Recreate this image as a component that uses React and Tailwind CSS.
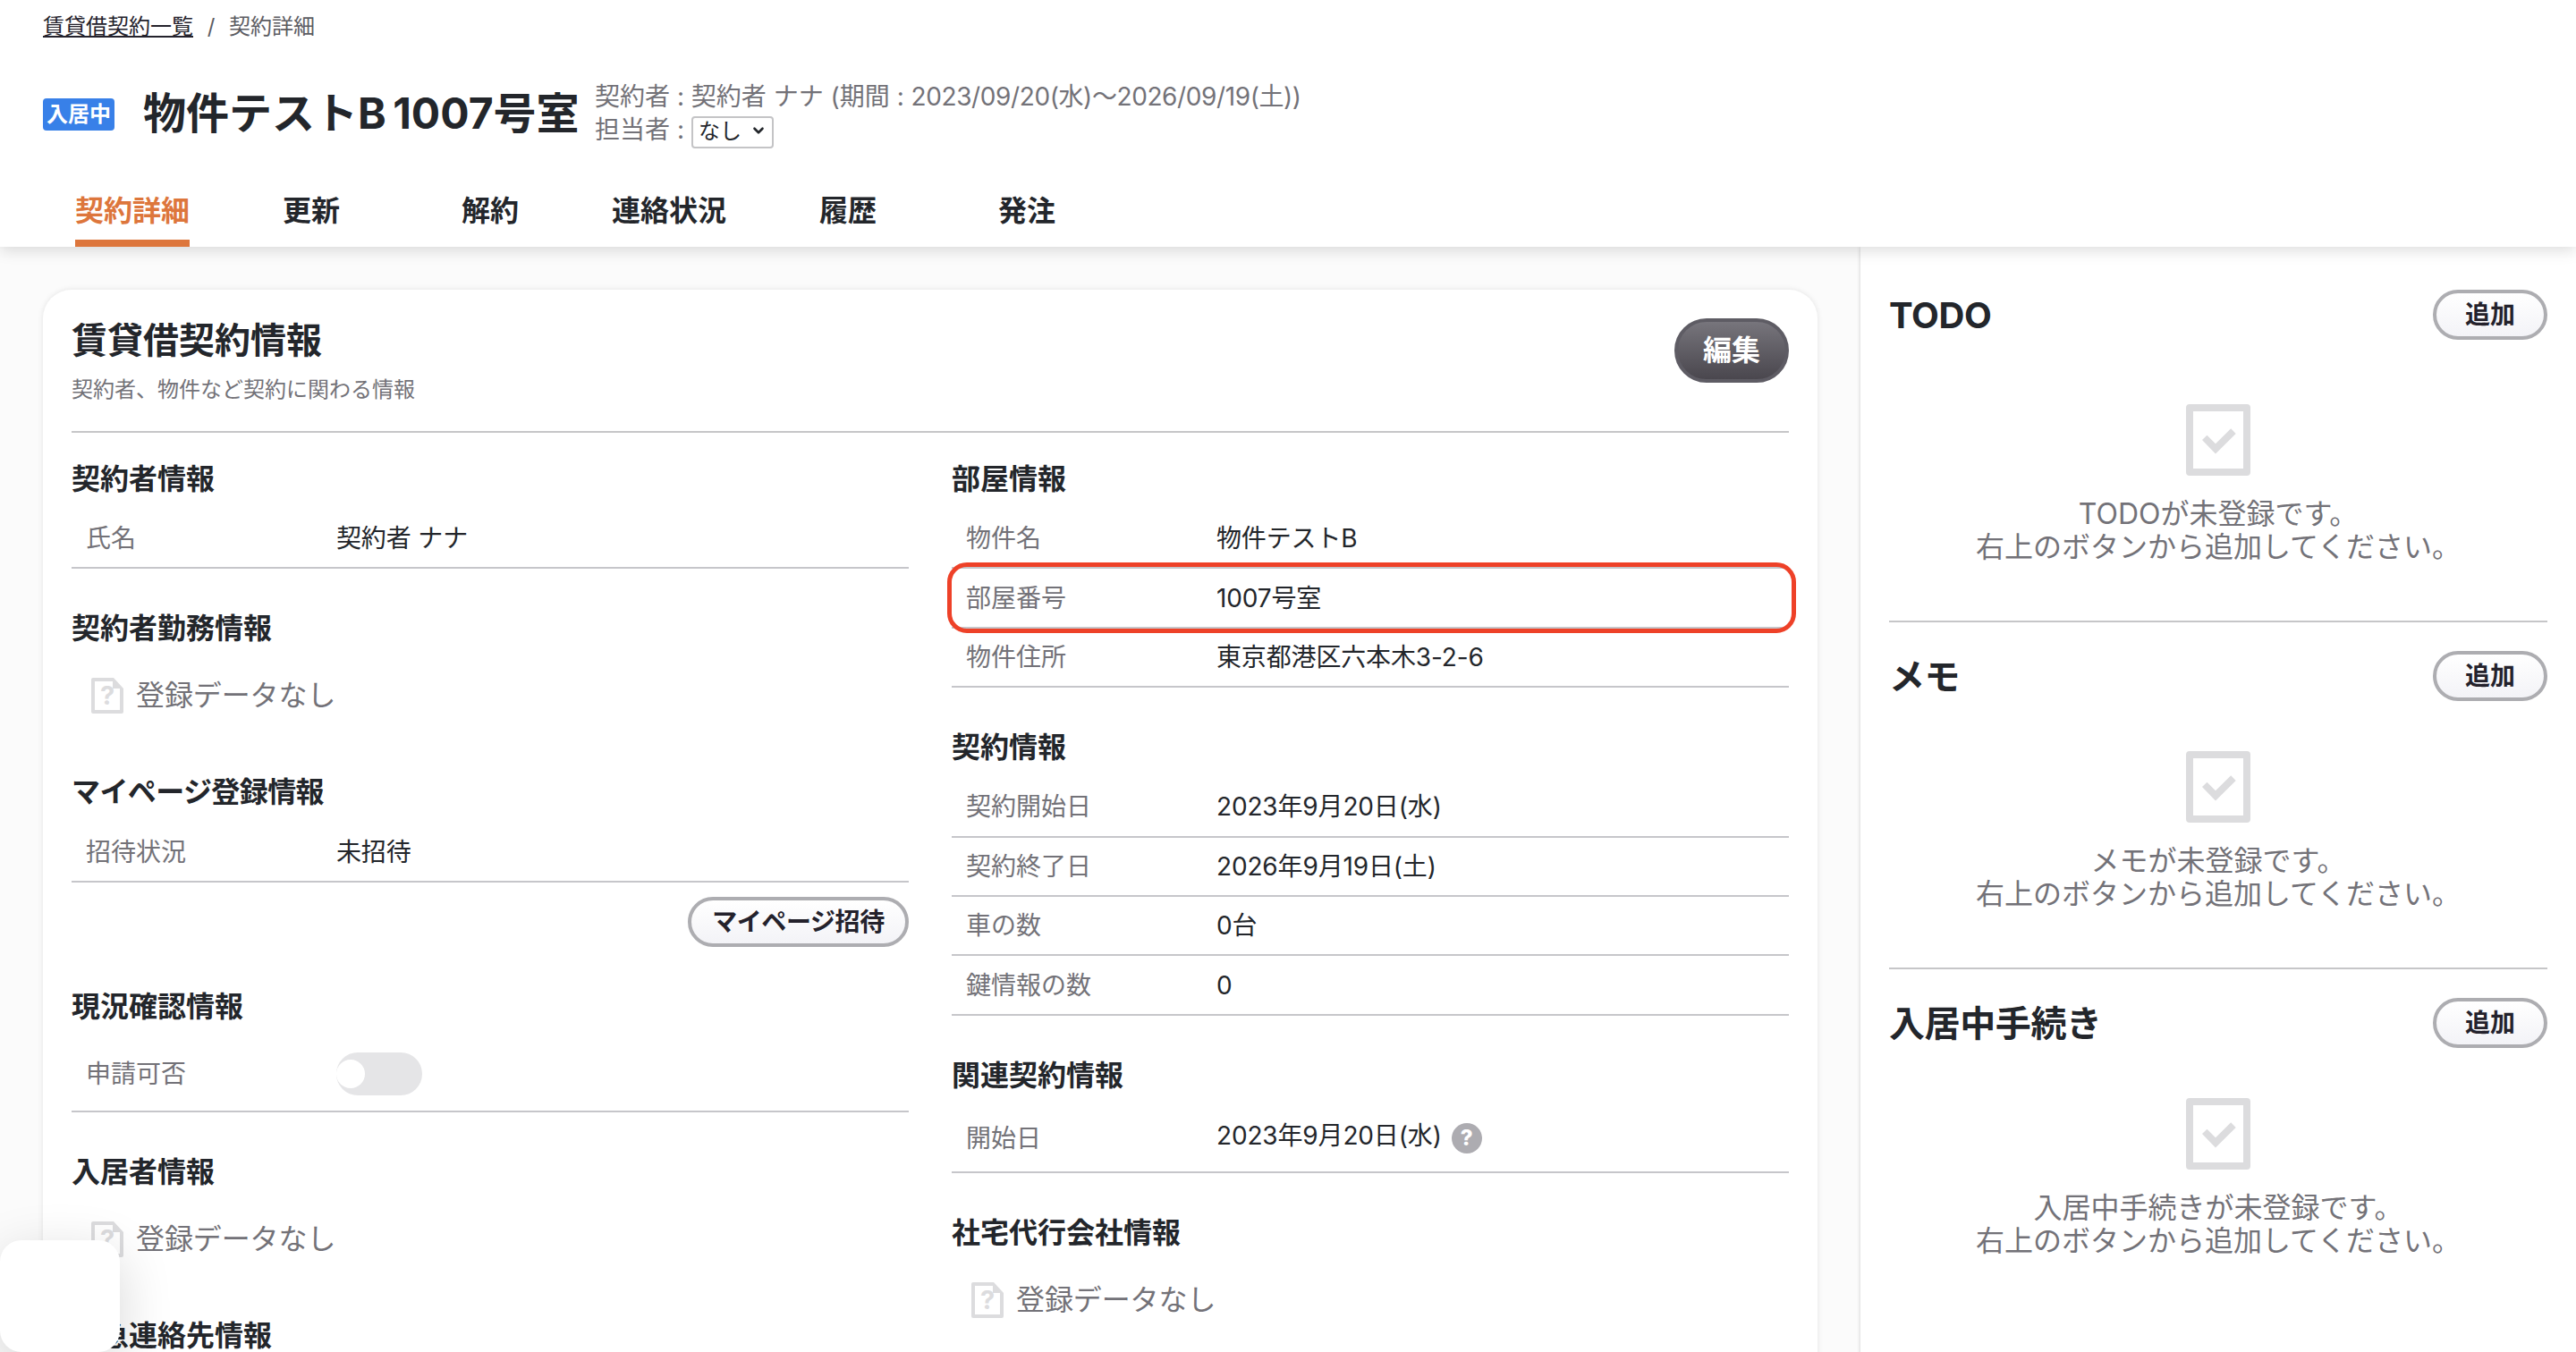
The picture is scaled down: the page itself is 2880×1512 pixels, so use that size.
import { useState } from 'react'
import { ChevronDown } from 'lucide-react'

const tabs = ['契約詳細', '更新', '解約', '連絡状況', '履歴', '発注']

const todoPanels = [
  { title: 'TODO', bodyClass: 'pt-[72px]' },
  { title: 'メモ', bodyClass: 'pt-14' },
  { title: '入居中手続き', bodyClass: 'pt-14' }
]

const EmptyFileIcon = () => (
  <svg className="w-9 h-10 shrink-0" viewBox="0 0 36 40">
    <path
      d="M2 0H25L36 12V38A2 2 0 0 1 34 40H2A2 2 0 0 1 0 38V2A2 2 0 0 1 2 0ZM4 4V36H32V12H24V4Z"
      fill="#dcdcde"
      fillRule="evenodd"
    />
    <text x="18" y="30.3" textAnchor="middle" fontSize="29" fontWeight="700" fill="#dcdcde" fontFamily="Inter, sans-serif">?</text>
  </svg>
)

const CheckBoxIcon = () => (
  <svg className="w-[72px] h-20" viewBox="0 0 72 80" fill="#dcdcde">
    <path d="M4 0H68A4 4 0 0 1 72 4V76A4 4 0 0 1 68 80H4A4 4 0 0 1 0 76V4A4 4 0 0 1 4 0ZM8 8V72H64V8Z" fillRule="evenodd" />
    <path d="M18 40L23.5 34.7L33 44.3L50.2 27.3L55.7 32.9L33 55.6Z" />
  </svg>
)

const Section = ({ title, titleClass = '', children }) => (
  <section className="mb-[43px]">
    <h3 className={`h-12 mb-[10px] text-[32px] leading-[48px] font-bold whitespace-nowrap ${titleClass}`}>{title}</h3>
    {children}
  </section>
)

const Row = ({ label, heightClass = 'h-[66.4px]', children }) => (
  <div className={`flex items-center border-b-2 border-[#c6c6ca] pl-4 text-[28px] ${heightClass}`}>
    <div className="w-[280px] shrink-0 text-[#737278]">{label}</div>
    <div className="flex items-center tracking-[-0.15px]">{children}</div>
  </div>
)

const NoData = () => (
  <div className="flex items-center h-[82px] pl-[22px] gap-[14px] text-[32px] tracking-[-0.1px] text-[#737278]">
    <EmptyFileIcon />
    <span>登録データなし</span>
  </div>
)

const OutlineButton = ({ className = '', children }) => (
  <button className={`h-14 shrink-0 rounded-full border-4 border-[#adadb1] bg-linear-to-b from-white to-[#f3f3f7] text-[28px] leading-none font-bold text-[#24222c] ${className}`}>
    {children}
  </button>
)

const App = () => {
  const [activeTab, setActiveTab] = useState('契約詳細')
  const [enabled, setEnabled] = useState(false)

  return (
    <div className="relative flex flex-col w-[2880px] h-[1512px] overflow-hidden bg-[#fbfbfb] text-[#23262b] font-[Inter,'Noto_Sans_CJK_JP',sans-serif]">
      {/* Header */}
      <header className="relative z-10 h-[276px] shrink-0 bg-white pl-12 shadow-[0_4px_16px_rgba(0,0,0,0.14)]">
        <nav className="flex items-center h-[58px] pt-px text-2xl">
          <a className="underline underline-offset-2 decoration-2 text-[#24222c]">賃貸借契約一覧</a>
          <span className="w-10 text-center text-[#5c5c62]">/</span>
          <span className="text-[#5c5c62]">契約詳細</span>
        </nav>

        <div className="flex items-center h-[136px]">
          <span className="flex items-center justify-center w-20 h-9 mt-1 rounded bg-[#3880e8] text-2xl font-bold text-white">入居中</span>
          <h1 className="ml-8 mt-0.5 w-[505px] text-[48px] leading-none font-bold whitespace-nowrap">
            物件テスト<span className="tracking-[-2px]">B </span>1007号室
          </h1>
          <div className="text-[28px] leading-[37px] text-[#737278] whitespace-nowrap">
            <div className="pt-px">
              契約者 : 契約者 ナナ (期間 : <span className="tracking-[-0.4px]">2023/09/20(水)〜2026/09/19(土))</span>
            </div>
            <div className="flex items-center h-9">
              <span>担当者 :</span>
              <div className="relative ml-2 w-[92px] h-9">
                <select className="w-full h-full appearance-none rounded border-2 border-[#c4c4c6] bg-white pl-1.5 pb-0.5 text-2xl leading-none text-[#23262b]">
                  <option>なし</option>
                </select>
                <ChevronDown className="absolute right-2 top-2.5 w-[18px] h-[18px] text-[#23262b]" strokeWidth={3.5} />
              </div>
            </div>
          </div>
        </div>

        <div className="flex h-[82px]">
          {tabs.map((tab) => (
            <div key={tab} className="flex justify-center w-[200px]">
              <button
                onClick={() => setActiveTab(tab)}
                className={`border-b-8 pt-2.5 text-[32px] font-bold ${activeTab === tab ? 'border-[#dd763c] text-[#dd763c]' : 'border-transparent'}`}
              >
                {tab}
              </button>
            </div>
          ))}
        </div>
      </header>

      <div className="flex grow">
        {/* Contract details */}
        <main className="w-[2080px] shrink-0 px-12 pt-12">
          <div className="h-[1400px] rounded-[32px] bg-white px-8 shadow-[0_0_6px_rgba(0,0,0,0.1)]">
            <div className="flex justify-between h-40 pt-8 border-b-2 border-[#c6c6c8]">
              <div>
                <h2 className="pt-px text-[40px] leading-[48px] font-bold">賃貸借契約情報</h2>
                <p className="mt-[13px] text-2xl leading-9 text-[#737278]">契約者、物件など契約に関わる情報</p>
              </div>
              <button className="w-32 h-[72px] rounded-full border-4 border-[#5e5c64] bg-linear-to-b from-[#77757c] to-[#4a474e] text-[32px] leading-none font-bold text-white">編集</button>
            </div>

            <div className="grid grid-cols-2 gap-12 pt-7">
              <div>
                <Section title="契約者情報">
                  <Row label="氏名">契約者 ナナ</Row>
                </Section>
                <Section title="契約者勤務情報">
                  <NoData />
                </Section>
                <Section title="マイページ登録情報" titleClass="tracking-[-0.6px]">
                  <Row label="招待状況">未招待</Row>
                  <div className="flex justify-end pt-4">
                    <OutlineButton className="w-[247px] tracking-[-0.4px]">マイページ招待</OutlineButton>
                  </div>
                </Section>
                <Section title="現況確認情報">
                  <Row label="申請可否" heightClass="h-[84px]">
                    <button
                      onClick={() => setEnabled(!enabled)}
                      className={`flex items-center w-24 h-12 rounded-full bg-[#e5e5e7] ${enabled ? 'justify-end' : 'justify-start'}`}
                    >
                      <span className="w-8 h-8 rounded-full bg-white" />
                    </button>
                  </Row>
                </Section>
                <Section title="入居者情報">
                  <NoData />
                </Section>
                <Section title="緊急連絡先情報" />
              </div>

              <div>
                <Section title="部屋情報">
                  <Row label="物件名">物件テストB</Row>
                  <div className="relative">
                    <Row label="部屋番号">1007号室</Row>
                    <div className="absolute -left-[5px] -right-2 -top-[7px] -bottom-[5px] rounded-[22px] border-[5px] border-[#ee4128]" />
                  </div>
                  <Row label="物件住所">東京都港区六本木3-2-6</Row>
                </Section>
                <Section title="契約情報">
                  <Row label="契約開始日">2023年9月20日(水)</Row>
                  <Row label="契約終了日">2026年9月19日(土)</Row>
                  <Row label="車の数">0台</Row>
                  <Row label="鍵情報の数">0</Row>
                </Section>
                <Section title="関連契約情報">
                  <Row label="開始日" heightClass="h-[75px]">
                    <span className="mb-1.5">2023年9月20日(水)</span>
                    <span className="flex items-center justify-center ml-[11px] w-[34px] h-[34px] rounded-full bg-[#adacb1] text-2xl leading-none font-extrabold text-white">?</span>
                  </Row>
                </Section>
                <Section title="社宅代行会社情報">
                  <NoData />
                </Section>
              </div>
            </div>
          </div>
        </main>

        {/* Sidebar */}
        <aside className="grow bg-white px-8 pt-4 shadow-[0_0_4px_rgba(0,0,0,0.2)]">
          {todoPanels.map((panel) => (
            <div key={panel.title} className="pt-8 pb-16 border-b-2 border-[#c6c6c8] last:border-b-0">
              <div className="flex items-center justify-between">
                <h2 className="pt-0.5 text-[40px] leading-[54px] font-bold tracking-[-0.4px]">{panel.title}</h2>
                <OutlineButton className="w-32">追加</OutlineButton>
              </div>
              <div className={`flex flex-col items-center ${panel.bodyClass}`}>
                <CheckBoxIcon />
                <p className="mt-6 text-center text-[32px] leading-[37px] text-[#737278]">
                  {panel.title}が未登録です。
                  <br />
                  右上のボタンから追加してください。
                </p>
              </div>
            </div>
          ))}
        </aside>
      </div>

      {/* Floating panel */}
      <div className="absolute z-20 left-0 bottom-0 w-[134px] h-[125px] rounded-3xl bg-white shadow-[0_16px_60px_rgba(0,0,0,0.16)]" />
    </div>
  )
}

export default App
